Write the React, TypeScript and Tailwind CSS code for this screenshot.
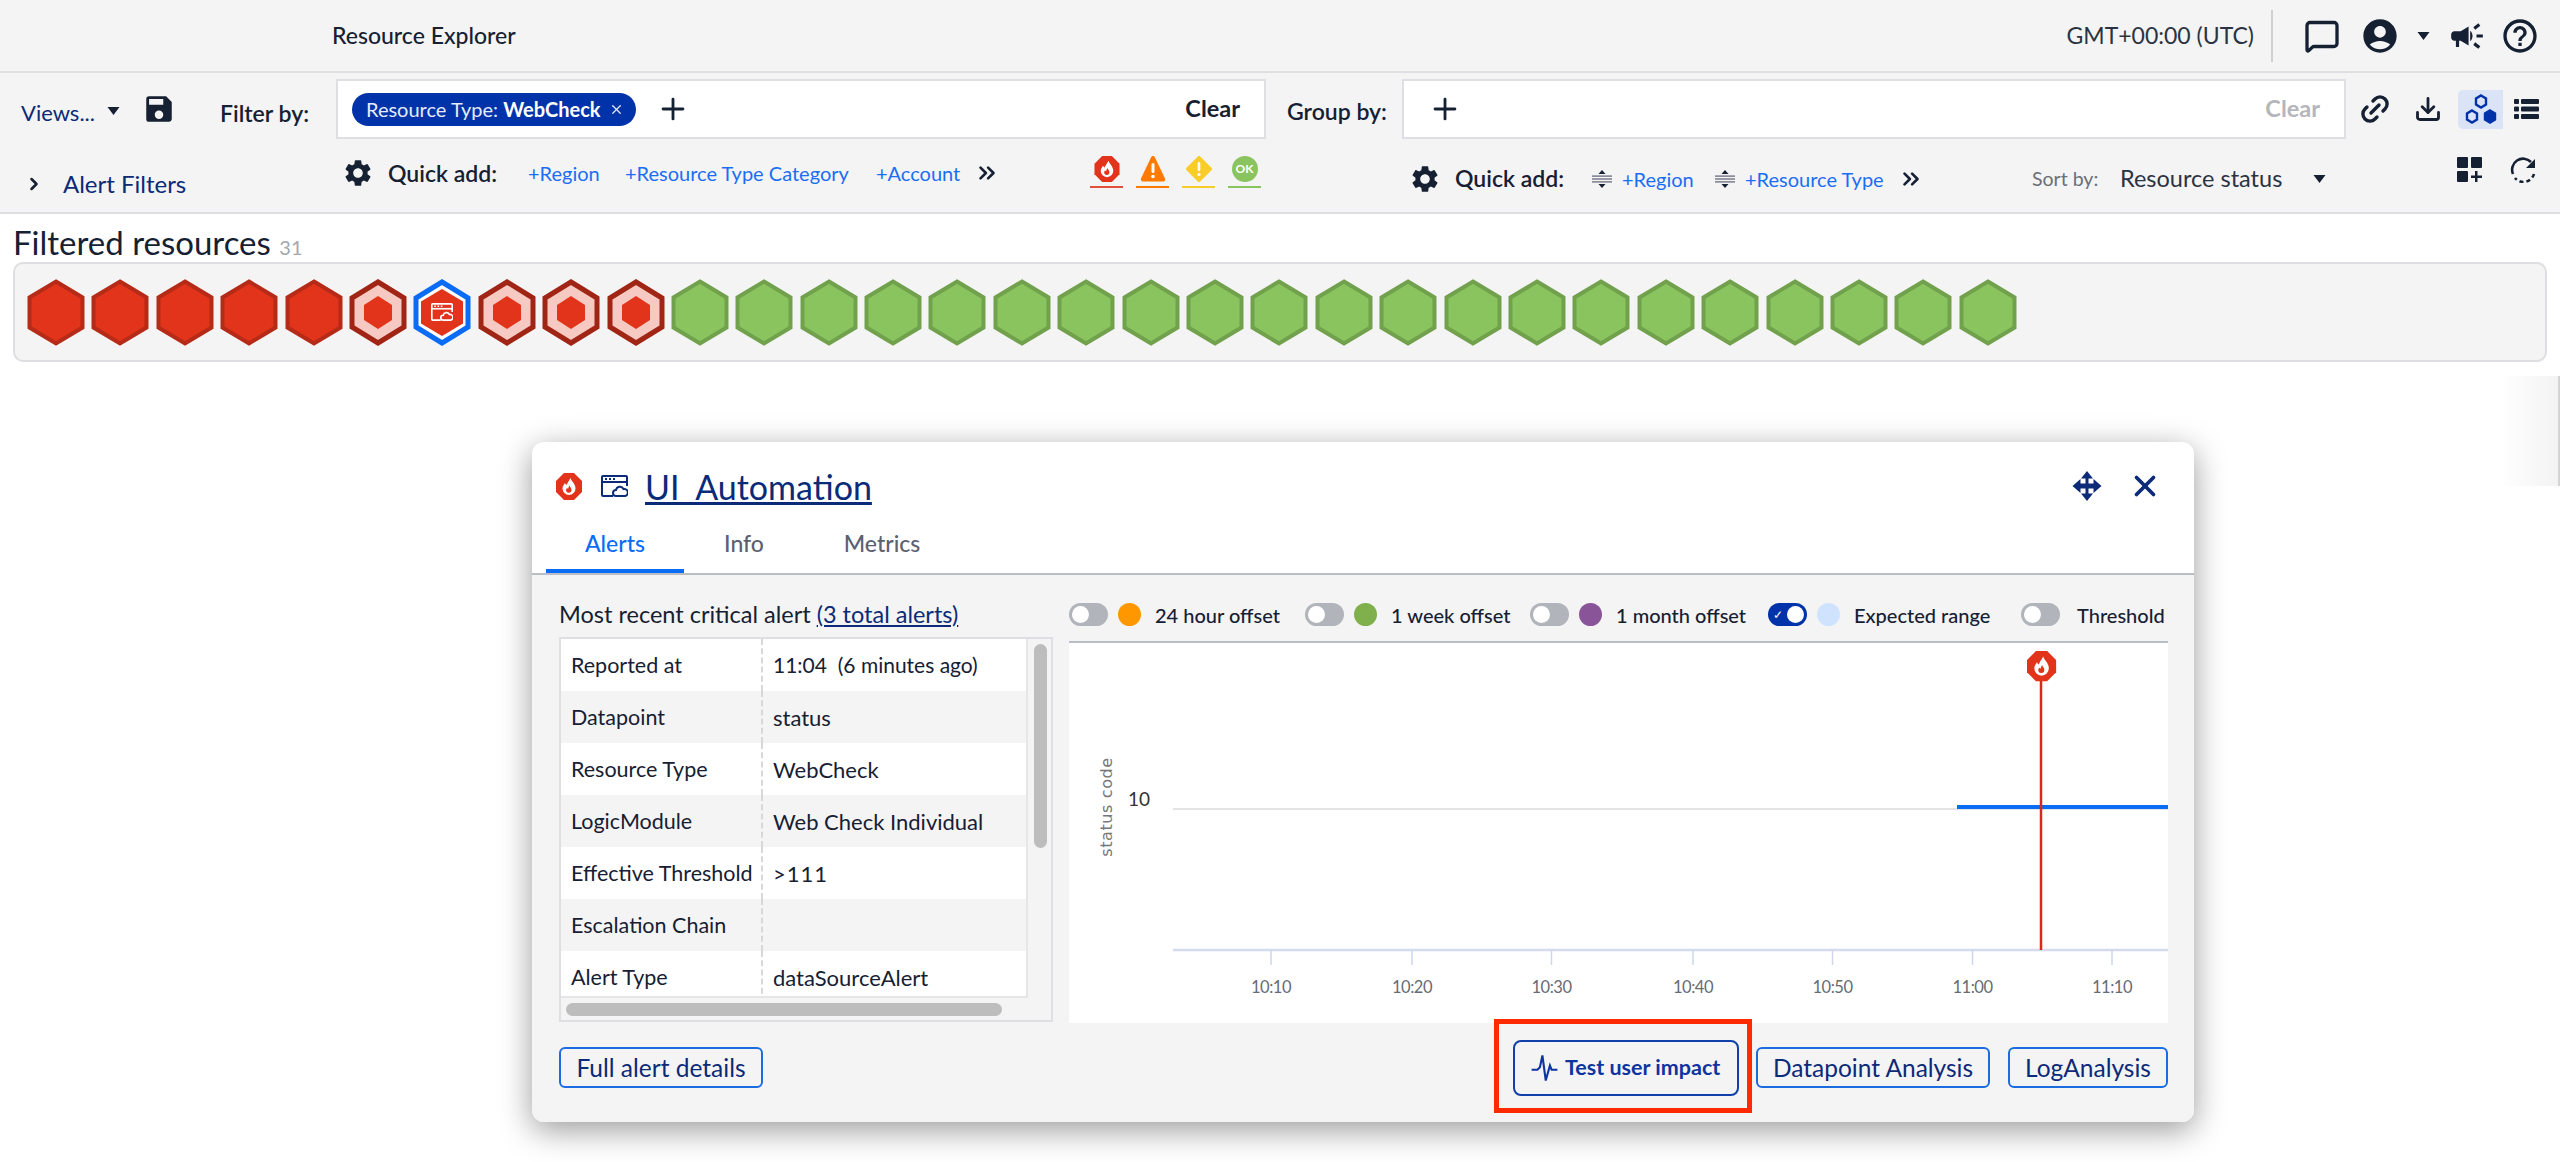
import { ChevronRight, ChevronsRight, Download, Link2, MessageSquare, Plus, X } from "lucide-react";
import { MdAccountCircle, MdCampaign, MdHelpOutline, MdSave, MdSettings } from "react-icons/md";

const Caret = ({ className = "" }: { className?: string }) => (
  <svg viewBox="0 0 12 8" className={`w-[13px] h-[8px] fill-[#162033] ${className}`}>
    <path d="M0 0h12L6 8z" />
  </svg>
);

const FLAME = "M14.500 5c.5 3 5 5.500 5 10.500a6.500 6.500 0 0 1-13 0c0-2.500 1.500-4 2.500-5.500.3 1 .8 1.700 1.500 2 .8-2 2.500-4 4-7z";
const FLAME_INNER = "M13.500 12.500c.3 1.500 2 2.500 2 4.500a2.700 2.700 0 0 1-5.400 0c0-1 .4-1.500 1-2 .3.500.6.700 1 .800.2-1.300.8-2.300 1.400-3.300z";

const Fire = ({ className = "" }: { className?: string }) => (
  <svg viewBox="0 0 26 27" className={className}>
    <path d="M8 0h10l8 8v11l-8 8H8l-8-8V8z" fill="#e2341a" />
    <path d={FLAME} fill="#fff" />
    <path d={FLAME_INNER} fill="#e2341a" />
  </svg>
);

const WindowCloud = ({ stroke, className = "" }: { stroke: string; className?: string }) => (
  <svg viewBox="0 0 27 22" fill="none" className={className} stroke={stroke} strokeWidth="2">
    <path d="M12 21H2a1 1 0 0 1-1-1V2a1 1 0 0 1 1-1h23a1 1 0 0 1 1 1v9" />
    <path d="M1 7h25" />
    <path d="M4 4h2M8 4h2M12 4h2" />
    <path d="M15 21a3 3 0 0 1 0-6 4 4 0 0 1 7.500-1 3.500 3.500 0 0 1 1.500 7z" />
  </svg>
);

const Hexagon = ({ kind }: { kind: string }) => {
  if (kind === "solid")
    return (
      <svg viewBox="0 0 58 67" className="w-[58px] h-[67px]">
        <polygon points="29,2.500 55.500,18.500 55.500,48.500 29,64.500 2.500,48.500 2.500,18.500" fill="#e2341a" stroke="#b62b17" strokeWidth="4" />
      </svg>
    );
  if (kind === "ok")
    return (
      <svg viewBox="0 0 58 67" className="w-[58px] h-[67px]">
        <polygon points="29,2.500 55.500,18.500 55.500,48.500 29,64.500 2.500,48.500 2.500,18.500" fill="#8ac45e" stroke="#71a14c" strokeWidth="4" />
      </svg>
    );
  if (kind === "ring")
    return (
      <svg viewBox="0 0 58 67" className="w-[58px] h-[67px]">
        <polygon points="29,3 55,19 55,48 29,64 3,48 3,19" fill="#f6c9c3" stroke="#a12514" strokeWidth="5" />
        <polygon points="29,17 43,26 43,41 29,50 15,41 15,26" fill="#e2341a" />
      </svg>
    );
  return (
    <div className="relative w-[58px] h-[67px]">
      <svg viewBox="0 0 58 67" className="w-[58px] h-[67px]">
        <polygon points="29,3 55,19 55,48 29,64 3,48 3,19" fill="#fff" stroke="#0a6cf5" strokeWidth="5" />
        <polygon points="29,10 50,22.500 50,44.500 29,57 8,44.500 8,22.500" fill="#e2341a" />
      </svg>
      <WindowCloud stroke="#fff" className="absolute left-[18px] top-[20px] w-[22px] h-[26px]" />
    </div>
  );
};

const GroupIcon = ({ className = "" }: { className?: string }) => (
  <svg viewBox="0 0 20 18" className={`w-[20px] h-[18px] ${className}`} fill="#5a6170">
    <path d="M10 0l3.500 4H6.500z" fill="#162033" />
    <path d="M10 18l-3.500-4h7z" fill="#162033" />
    <rect x="0" y="5.500" width="20" height="1.200" />
    <rect x="0" y="8.400" width="20" height="1.200" />
    <rect x="0" y="11.300" width="20" height="1.200" />
  </svg>
);

const Toggle = ({ on = false }: { on?: boolean }) =>
  on ? (
    <div className="flex h-[23px] w-[39px] items-center justify-end rounded-full bg-[#0033a9] pr-[3px]">
      <span className="mr-[4px] text-[12px] leading-none text-white">✓</span>
      <span className="h-[17px] w-[17px] rounded-full bg-white" />
    </div>
  ) : (
    <div className="flex h-[23px] w-[39px] items-center rounded-full bg-[#b2b4bb] pl-[3px]">
      <span className="h-[17px] w-[17px] rounded-full bg-white" />
    </div>
  );

const legend = [
  { label: "24 hour offset", dot: "bg-[#ff9800]", w: "w-[236px]" },
  { label: "1 week offset", dot: "bg-[#7fb04b]", w: "w-[225px]" },
  { label: "1 month offset", dot: "bg-[#8a5499]", w: "w-[238px]" },
  { label: "Expected range", dot: "bg-[#cfe3ff]", w: "w-[253px]", on: true },
];

const rows = [
  ["Reported at", "11:04  (6 minutes ago)"],
  ["Datapoint", "status"],
  ["Resource Type", "WebCheck"],
  ["LogicModule", "Web Check Individual"],
  ["Effective Threshold", ">111"],
  ["Escalation Chain", ""],
  ["Alert Type", "dataSourceAlert"],
];

const ticks = [
  [202, "10:10"],
  [343, "10:20"],
  [482.5, "10:30"],
  [624, "10:40"],
  [763.5, "10:50"],
  [903.5, "11:00"],
  [1043, "11:10"],
] as const;

const hexes = [
  ...Array(5).fill("solid"),
  "ring",
  "selected",
  "ring",
  "ring",
  "ring",
  ...Array(21).fill("ok"),
];

export default function App() {
  return (
    <div className="relative h-[1162px] w-[2560px] overflow-hidden bg-white text-[#162033] [font-family:Lato,sans-serif]">
      {/* Top bar */}
      <header className="flex h-[73px] items-center border-b-2 border-[#dddfe3] bg-[#f4f4f4] pl-[332px] pr-[20px]">
        <h1 className="text-[23px] font-medium">Resource Explorer</h1>
        <span className="ml-auto text-[23px] text-[#2b3342]">GMT+00:00 (UTC)</span>
        <div className="ml-[17px] h-[52px] w-[2px] bg-[#cfd0d3]" />
        <MessageSquare className="ml-[31px] h-[36px] w-[36px]" strokeWidth={2.2} />
        <MdAccountCircle className="ml-[20px] h-[40px] w-[40px]" />
        <Caret className="ml-[17px]" />
        <MdCampaign className="ml-[18px] h-[38px] w-[38px]" />
        <MdHelpOutline className="ml-[14px] h-[40px] w-[40px]" />
      </header>

      {/* Filter toolbar */}
      <section className="h-[141px] border-b-2 border-[#dddfe3] bg-[#f4f4f4] pt-[6px]">
        <div className="flex h-[60px] items-center pl-[21px]">
          <div className="flex w-[125px] items-center pt-[6px]">
            <span className="text-[22px] text-[#0b2a78]">Views...</span>
            <Caret className="ml-[12px] -mt-[3px]" />
          </div>
          <div className="w-[74px]">
            <MdSave className="-ml-[4px] h-[34px] w-[34px]" />
          </div>
          <span className="w-[116px] pt-[8px] text-[23px] font-semibold">Filter by:</span>
          <div className="flex h-[60px] w-[930px] items-center border-2 border-[#dddfe3] bg-white pl-[14px] pr-[24px]">
            <div className="flex h-[33px] w-[284px] items-center whitespace-nowrap rounded-full bg-[#0033a9] pl-[14px] text-[20px] text-[#e6ecfa]">
              Resource Type:&nbsp;<span className="font-bold text-white">WebCheck</span>
              <X className="ml-[8px] h-[15px] w-[15px]" />
            </div>
            <Plus className="ml-[20px] h-[34px] w-[34px]" strokeWidth={2} />
            <span className="ml-auto text-[23.500px] font-bold">Clear</span>
          </div>
          <span className="w-[136px] pl-[21px] pt-[4px] text-[23px] font-semibold">Group by:</span>
          <div className="flex h-[60px] w-[944px] items-center border-2 border-[#dddfe3] bg-white pl-[24px] pr-[24px]">
            <Plus className="h-[34px] w-[34px]" strokeWidth={2} />
            <span className="ml-auto text-[23.500px] font-bold text-[#b4b6bc]">Clear</span>
          </div>
          <Link2 className="ml-[12px] h-[34px] w-[34px] -rotate-45" strokeWidth={2.4} />
          <Download className="ml-[22px] h-[28px] w-[28px]" strokeWidth={2.4} />
          <div className="ml-[16px] flex h-[39px] w-[45px] items-center justify-center rounded-l-[5px] bg-[#dbe4f7]">
            <svg viewBox="0 0 32 30" className="h-[30px] w-[32px]" fill="none" stroke="#0033a9" strokeWidth="2.400">
              <polygon points="16,1.500 21,4.500 21,10.500 16,13.500 11,10.500 11,4.500" />
              <polygon points="7,16.500 12,19.500 12,25.500 7,28.500 2,25.500 2,19.500" />
              <polygon points="25,16.500 30,19.500 30,25.500 25,28.500 20,25.500 20,19.500" fill="#0033a9" />
            </svg>
          </div>
          <svg viewBox="0 0 25 20" className="ml-[11px] h-[20px] w-[25px] fill-[#162033]">
            <rect x="0" y="0" width="5" height="5" rx="1" />
            <rect x="7" y="0" width="18" height="5" rx="1" />
            <rect x="0" y="7.500" width="5" height="5" rx="1" />
            <rect x="7" y="7.500" width="18" height="5" rx="1" />
            <rect x="0" y="15" width="5" height="5" rx="1" />
            <rect x="7" y="15" width="18" height="5" rx="1" />
          </svg>
        </div>

        <div className="flex h-[73px] items-start">
          <div className="mt-[29px] flex w-[345px] items-center pl-[24px]">
            <ChevronRight className="h-[20px] w-[20px]" strokeWidth={3} />
            <span className="ml-[19px] text-[24px] leading-[32px] text-[#0b2a78]">Alert Filters</span>
          </div>
          <div className="mt-[17px] flex w-[745px] items-center">
            <MdSettings className="-ml-[3px] h-[32px] w-[32px]" />
            <span className="w-[154px] pl-[14px] text-[23px] font-semibold">Quick add:</span>
            <span className="w-[97px] text-[20px] text-[#1a6ef5]">+Region</span>
            <span className="w-[251px] whitespace-nowrap text-[20px] text-[#1a6ef5]">+Resource Type Category</span>
            <span className="w-[101px] text-[20px] text-[#1a6ef5]">+Account</span>
            <ChevronsRight className="-ml-[3px] h-[26px] w-[26px]" strokeWidth={2.4} />
          </div>
          <div className="mt-[17px] flex gap-[13px]">
            <div className="flex h-[32px] w-[33px] flex-col items-center justify-between border-b-2 border-[#e2503c]">
              <Fire className="h-[26px] w-[26px]" />
            </div>
            <div className="flex h-[32px] w-[33px] flex-col items-center border-b-2 border-[#ff7a00]">
              <svg viewBox="0 0 26 26" className="h-[26px] w-[26px]">
                <path d="M13 0c1 0 1.500.5 2 1.500l10 21c.5 1.500 0 3-2 3H3c-2 0-2.500-1.500-2-3l10-21C11.500.5 12 0 13 0z" fill="#ff7a00" />
                <rect x="11.500" y="7" width="3" height="10" rx="1.500" fill="#fff" />
                <circle cx="13" cy="20.500" r="1.800" fill="#fff" />
              </svg>
            </div>
            <div className="flex h-[32px] w-[33px] flex-col items-center border-b-2 border-[#f8cd2a]">
              <svg viewBox="0 0 26 26" className="h-[26px] w-[26px]">
                <path d="M11.500.8a2 2 0 0 1 3 0l10.700 10.700a2 2 0 0 1 0 3L14.500 25.200a2 2 0 0 1-3 0L.8 14.500a2 2 0 0 1 0-3z" fill="#f8cd2a" />
                <rect x="11.700" y="6" width="2.600" height="9" rx="1.300" fill="#fff" />
                <circle cx="13" cy="18.500" r="1.600" fill="#fff" />
              </svg>
            </div>
            <div className="flex h-[32px] w-[33px] flex-col items-center border-b-2 border-[#8ac45e]">
              <div className="flex h-[26px] w-[26px] items-center justify-center rounded-full bg-[#8ac45e] text-[12px] font-bold text-white">OK</div>
            </div>
          </div>
          <div className="ml-[151px] mt-[22px] flex items-center">
            <MdSettings className="-ml-[3px] h-[32px] w-[32px]" />
            <span className="w-[151px] pl-[14px] text-[23px] font-semibold">Quick add:</span>
            <GroupIcon />
            <span className="ml-[10px] w-[93px] text-[20px] text-[#1a6ef5]">+Region</span>
            <GroupIcon />
            <span className="ml-[10px] w-[156px] whitespace-nowrap text-[20px] text-[#1a6ef5]">+Resource Type</span>
            <ChevronsRight className="-ml-[3px] h-[26px] w-[26px]" strokeWidth={2.4} />
            <span className="ml-[108px] w-[88px] text-[19.500px] text-[#6b6f78]">Sort by:</span>
            <span className="w-[193px] whitespace-nowrap text-[23.500px] text-[#2b3342]">Resource status</span>
            <Caret />
          </div>
          <svg viewBox="0 0 25 25" className="ml-[131px] mt-[18px] h-[25px] w-[25px] fill-[#162033]">
            <rect x="0" y="0" width="11" height="11" rx="1" />
            <rect x="14" y="0" width="11" height="11" rx="1" />
            <rect x="0" y="14" width="11" height="11" rx="1" />
            <path d="M18 14h2.500v4.500H25V21h-4.500v4H18v-4h-4v-2.500h4z" />
          </svg>
          <svg viewBox="0 0 26 26" fill="none" className="ml-[28px] mt-[18px] h-[26px] w-[26px]">
            <path d="M3 17A11 11 0 0 1 21 5" stroke="#162033" strokeWidth="2.600" />
            <path d="M24 17A11 11 0 0 1 5 21" stroke="#162033" strokeWidth="2.600" strokeDasharray="4 3" />
            <path d="M25 2v9h-9z" fill="#162033" />
          </svg>
        </div>
      </section>

      {/* Filtered resources */}
      <section className="px-[13px] pt-[9px]">
        <h2 className="h-[39px] text-[33px] leading-[39px]">
          Filtered resources <span className="text-[20px] text-[#a5a8ae]">31</span>
        </h2>
        <div className="flex h-[100px] w-[2534px] items-center gap-[6.400px] rounded-[10px] border-2 border-[#dddfe3] bg-[#f4f4f4] pl-[12px]">
          {hexes.map((kind, i) => (
            <Hexagon key={i} kind={kind} />
          ))}
        </div>
      </section>

      {/* Edge of a faded panel at the right */}
      <div className="absolute right-0 top-[376px] h-[110px] w-[60px] border-r-2 border-[#d4d4d4] bg-gradient-to-l from-[#f3f3f3] to-white" />

      {/* Resource popup */}
      <div className="absolute left-[532px] top-[442px] flex h-[680px] w-[1662px] flex-col overflow-hidden rounded-[12px] bg-white shadow-[0_8px_32px_rgba(0,0,0,0.4)]">
        <div className="h-[133px] shrink-0 border-b-2 border-[#b9bdc4]">
          <div className="flex h-[88px] items-center pl-[24px] pr-[32px]">
            <Fire className="h-[27px] w-[26px]" />
            <WindowCloud stroke="#0b2a78" className="ml-[19px] h-[22px] w-[27px]" />
            <a className="ml-[17px] text-[34px] text-[#0b2a78] underline">UI_Automation</a>
            <svg viewBox="0 0 30 30" className="ml-auto h-[30px] w-[30px] fill-[#0b2a78]">
              <path d="M15 0l6 7.500h-4.500v5h5V8l8 7-8 7v-4.500h-5v5H21L15 30l-6-7.500h4.500v-5h-5V22l-8-7 8-7v4.500h5v-5H9z" />
            </svg>
            <X className="ml-[26px] h-[34px] w-[34px] text-[#0b2a78]" strokeWidth={2.6} />
          </div>
          <div className="flex h-[43px] pl-[14px] text-[23px] font-medium text-[#5b6170]">
            <div className="flex w-[138px] items-center justify-center border-b-[4px] border-[#0a6cf5] pb-[12px] text-[#0a6cf5]">Alerts</div>
            <div className="flex w-[120px] items-center justify-center pb-[16px]">Info</div>
            <div className="flex w-[156px] items-center justify-center pb-[16px]">Metrics</div>
          </div>
        </div>

        <div className="flex flex-1 flex-col bg-[#f4f4f4] pl-[27px] pr-[26px]">
          <div className="flex gap-[16px]">
            {/* Alert details */}
            <div className="w-[494px]">
              <div className="flex h-[62px] items-center whitespace-nowrap pt-[18px] text-[23.500px]">
                Most recent critical alert&nbsp;<a className="text-[#0b2a78] underline">(3 total alerts)</a>
              </div>
              <div className="h-[385px] border-2 border-[#dddfe3] bg-[#f4f4f4]">
                <div className="flex h-[359px]">
                  <div className="h-full w-[467px] overflow-hidden border-r-2 border-b-2 border-[#e6e6e8] text-[21.500px]">
                    {rows.map(([k, v], i) => (
                      <div key={k} className={`flex h-[52px] shrink-0 items-center ${i % 2 ? "bg-[#f4f4f4]" : "bg-white"}`}>
                        <div className="flex h-full w-[202px] items-center whitespace-nowrap border-r-2 border-dashed border-[#d8d8d8] pl-[10px]">{k}</div>
                        <div className={`whitespace-pre pl-[10px] ${i === 0 ? "text-[21px]" : "text-[22px]"} ${v === ">111" ? "tracking-[1px]" : ""}`}>{v}</div>
                      </div>
                    ))}
                  </div>
                  <div className="pl-[6px] pt-[5px]">
                    <div className="h-[204px] w-[13px] rounded-full bg-[#bdbdbd]" />
                  </div>
                </div>
                <div className="pl-[5px] pt-[5px]">
                  <div className="h-[13px] w-[436px] rounded-full bg-[#bdbdbd]" />
                </div>
              </div>
            </div>

            {/* Chart */}
            <div className="w-[1099px]">
              <div className="flex h-[66px] items-center pt-[13px]">
                {legend.map((l) => (
                  <div key={l.label} className={`flex items-center ${l.w}`}>
                    <Toggle on={l.on} />
                    <span className={`ml-[10px] h-[23px] w-[23px] rounded-full ${l.dot}`} />
                    <span className="ml-[14px] whitespace-nowrap text-[20px] font-medium">{l.label}</span>
                  </div>
                ))}
                <div className="flex items-center">
                  <Toggle />
                  <span className="ml-[17px] text-[20px] font-medium">Threshold</span>
                </div>
              </div>
              <div className="h-[382px] border-t-2 border-[#b9bdc4] bg-white">
                <svg viewBox="0 0 1099 380" className="h-[380px] w-[1099px]">
                  <line x1="104" x2="1099" y1="166" y2="166" stroke="#e4e4e6" strokeWidth="2" />
                  <line x1="888" x2="1099" y1="164" y2="164" stroke="#0a6cf5" strokeWidth="4" />
                  <line x1="104" x2="1099" y1="307" y2="307" stroke="#d3dbef" strokeWidth="2.500" />
                  {ticks.map(([x, label]) => (
                    <g key={label}>
                      <line x1={x} x2={x} y1="307" y2="322" stroke="#cdd6ee" strokeWidth="1.500" />
                      <text x={x} y="350" textAnchor="middle" fontSize="16.500" letterSpacing="-0.5" fill="#666b75">{label}</text>
                    </g>
                  ))}
                  <text x="70" y="163" textAnchor="middle" fontSize="19" fill="#333">10</text>
                  <text transform="translate(43 164) rotate(-90)" textAnchor="middle" fontSize="16" letterSpacing="0.6" fill="#777" fontFamily="DejaVu Sans">status code</text>
                  <line x1="972" x2="972" y1="30" y2="307" stroke="#d9281e" strokeWidth="2.500" />
                  <g transform="translate(958 8) scale(1.120)">
                    <path d="M8 0h10l8 8v11l-8 8H8l-8-8V8z" fill="#e2341a" />
                    <path d={FLAME} fill="#fff" />
                    <path d={FLAME_INNER} fill="#e2341a" />
                  </g>
                </svg>
              </div>
            </div>
          </div>

          {/* Footer buttons */}
          <div className="mt-[24px] flex items-center">
            <button className="h-[41px] w-[204px] whitespace-nowrap rounded-[6px] border-2 border-[#1a6ce0] pt-[2px] text-[24.500px] leading-none text-[#0b2a78]">Full alert details</button>
            <div className="-mb-[28px] -mt-[32px] ml-auto flex h-[94px] w-[258px] items-center border-[5px] border-[#ff2a00] pl-[14px] pt-[4px]">
              <button className="flex h-[56px] w-[226px] items-center gap-[5px] whitespace-nowrap rounded-[8px] border-2 border-[#1140a8] pl-[14px] text-[21.500px] font-bold text-[#0d34a0]">
                <svg viewBox="0 0 31 36" className="h-[30px] w-[31px]" fill="none" stroke="#0d34a0" strokeWidth="2.500">
                  <path d="M0 20h7l3-3 3-14 4 30 5-18 2 5h7" />
                </svg>
                Test user impact
              </button>
            </div>
            <button className="ml-[4px] h-[41px] w-[234px] whitespace-nowrap rounded-[6px] border-2 border-[#1a6ce0] pt-[2px] text-[24.500px] leading-none text-[#0b2a78]">Datapoint Analysis</button>
            <button className="ml-[18px] h-[41px] w-[160px] whitespace-nowrap rounded-[6px] border-2 border-[#1a6ce0] pt-[2px] text-[24.500px] leading-none text-[#0b2a78]">LogAnalysis</button>
          </div>
        </div>
      </div>
    </div>
  );
}
